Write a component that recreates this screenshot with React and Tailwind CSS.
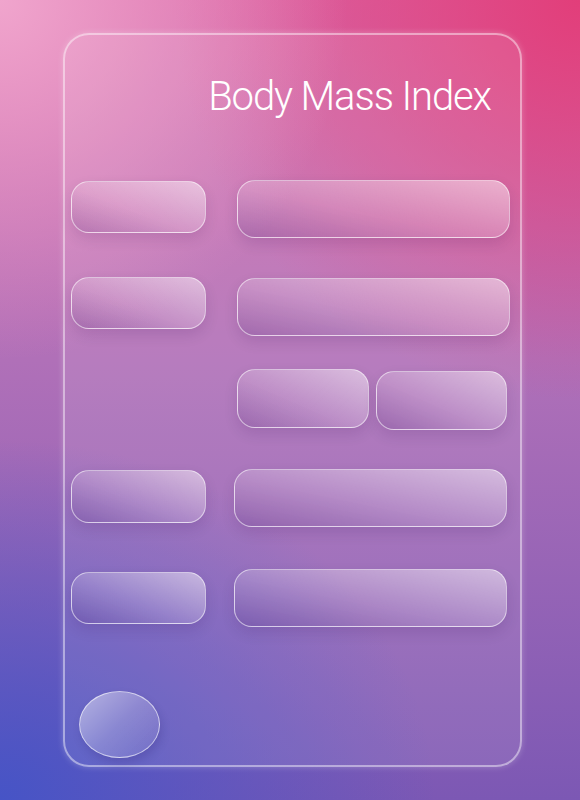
import React from "react";

const pill =
  "rounded-[18px] border border-white/55 bg-[linear-gradient(to_top_right,rgba(70,30,110,0.2)_0%,rgba(255,255,255,0.16)_45%,rgba(255,255,255,0.5)_100%)] shadow-[0_6px_14px_rgba(40,10,70,0.12)]";

export default function App() {
  return (
    <div
      className="w-[580px] h-[800px] overflow-hidden pt-[33px] pl-[63px] bg-[radial-gradient(ellipse_60%_45%_at_0%_0%,rgba(240,165,205,1)_0%,rgba(240,165,205,0)_100%),radial-gradient(ellipse_70%_50%_at_100%_0%,rgba(226,62,122,1)_0%,rgba(226,62,122,0)_100%),radial-gradient(ellipse_75%_45%_at_0%_100%,rgba(70,84,198,1)_0%,rgba(70,84,198,0)_100%),linear-gradient(to_bottom,#d868a8_0%,#b070b8_45%,#7c58b4_100%)]"
      style={{ fontFamily: "Roboto, 'Noto Sans', sans-serif" }}
    >
      <div className="w-[459px] h-[734px] rounded-[26px] border-2 border-white/45 bg-white/[0.09] shadow-[0_0_6px_rgba(255,255,255,0.25)] flex flex-col">
        <div className="flex justify-end pr-[29px] mt-[38px]">
          <h1 className="text-[40px] leading-[48px] font-light text-white tracking-[-1.1px]">
            Body Mass Index
          </h1>
        </div>

        {/* Row 1 */}
        <div className="flex items-start mt-[59px] pl-[6px]">
          <div className={`${pill} w-[135px] h-[52px] mt-px`} />
          <div className={`${pill} w-[273px] h-[58px] ml-[31px]`} />
        </div>

        {/* Row 2 */}
        <div className="flex items-start mt-[39px] pl-[6px]">
          <div className={`${pill} w-[135px] h-[52px]`} />
          <div className={`${pill} w-[273px] h-[58px] ml-[31px] mt-px`} />
        </div>

        {/* Row 3 */}
        <div className="flex items-start mt-[33px] pl-[172px]">
          <div className={`${pill} w-[132px] h-[59px]`} />
          <div className={`${pill} w-[131px] h-[59px] ml-[7px] mt-[2px]`} />
        </div>

        {/* Row 4 */}
        <div className="flex items-start mt-[39px] pl-[6px]">
          <div className={`${pill} w-[135px] h-[53px] mt-px`} />
          <div className={`${pill} w-[273px] h-[58px] ml-[28px]`} />
        </div>

        {/* Row 5 */}
        <div className="flex items-start mt-[42px] pl-[6px]">
          <div className={`${pill} w-[135px] h-[52px] mt-[3px]`} />
          <div className={`${pill} w-[273px] h-[58px] ml-[28px]`} />
        </div>

        <div className="mt-[64px] pl-[14px]">
          <div className="w-[81px] h-[67px] rounded-[50%] border border-white/60 bg-[linear-gradient(135deg,rgba(255,255,255,0.5)_0%,rgba(255,255,255,0.22)_50%,rgba(255,255,255,0.05)_100%)] shadow-[2px_5px_10px_rgba(20,10,80,0.15)]" />
        </div>
      </div>
    </div>
  );
}
